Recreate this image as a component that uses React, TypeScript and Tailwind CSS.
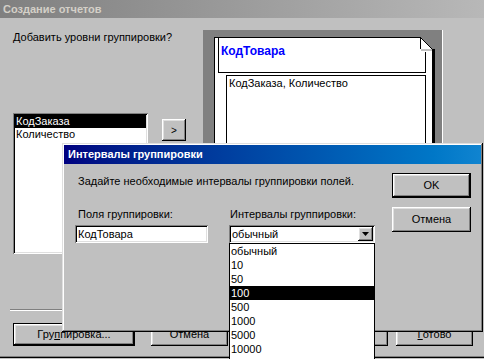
import React from 'react';

const raised = 'shadow-[inset_-1px_-1px_0_#000,inset_1px_1px_0_#fff,inset_-2px_-2px_0_#808080,inset_2px_2px_0_#dfdfdf]';
const sunken = 'shadow-[inset_1px_1px_0_#808080,inset_-1px_-1px_0_#fff,inset_2px_2px_0_#000,inset_-2px_-2px_0_#dfdfdf]';

type BtnProps = { className?: string; def?: boolean; children?: React.ReactNode };

// win9x push button; default one gets an extra black frame
const Btn: React.FC<BtnProps> = ({ className = '', def, children }) =>
  def ? (
    <div className={`border border-black ${className}`}>
      <div className={`w-full h-full flex items-center justify-center ${raised}`}>{children}</div>
    </div>
  ) : (
    <div className={`flex items-center justify-center ${raised} ${className}`}>{children}</div>
  );

const intervals = ['обычный', '10', '50', '100', '500', '1000', '5000', '10000'];

export default function App() {
  return (
    <div className="relative w-[484px] h-[359px] overflow-hidden bg-[#c0c0c0] text-black text-[11px] leading-[13px] font-['Liberation_Sans',Arial,sans-serif]">
      {/* outer wizard window */}
      <div className="h-[18px] flex items-center pl-[3px] bg-linear-to-r from-[#808080] to-[#b8b8b8] text-[#d4d0c8] font-bold">
        Создание отчетов
      </div>

      <div className="flex pl-[13px] pt-[12px] h-[282px]">
        <div className="w-[135px] flex flex-col">
          <div className="pt-[1px] whitespace-nowrap">Добавить уровни группировки?</div>
          <div className={`mt-[69px] h-[141px] bg-white p-[2px] ${sunken}`}>
            <div className="h-[13px] pl-[1px] bg-black text-white">КодЗаказа</div>
            <div className="h-[13px] pl-[1px]">Количество</div>
          </div>
        </div>

        <Btn className="ml-[14px] mt-[89px] w-[24px] h-[22px] text-[10px]">&gt;</Btn>

        <div className="ml-[17px] w-[240px] h-[270px] bg-[#808080] border-r border-b border-white">
          <div className="relative ml-[11px] mt-[7px] flex">
            <div className="w-[218px] h-[250px] bg-white border-l border-t border-black">
              <div className="ml-[3px] -mt-px w-[208px] h-[36px] border border-black pl-[2px] pt-[6px] text-[12px] leading-[14px] font-bold text-[#0000ff]">
                КодТовара
              </div>
              <div className="ml-[11px] mt-[2px] w-[200px] h-[180px] border border-black pl-[2px] pt-[1px]">
                КодЗаказа, Количество
              </div>
            </div>
            <div className="w-[3px] h-[238px] mt-[12px] bg-black" />
            <svg className="absolute left-[206px] top-0" width="15" height="15" viewBox="0 0 15 15">
              <rect x="0" y="0" width="15" height="15" fill="#808080" />
              <polygon points="0,0 12,12 12,15 0,15" fill="#fff" />
              <rect x="0" y="0" width="1" height="12" fill="#000" />
              <path d="M0.5 0.5 L12.5 12.5" stroke="#000" strokeWidth="1" />
              <rect x="1" y="12" width="11" height="2" fill="#c0c0c0" />
              <rect x="12" y="12" width="3" height="3" fill="#000" />
            </svg>
          </div>
        </div>
      </div>

      <div className="ml-[10px] mr-[10px] mt-[9px] border-t border-t-[#808080] border-b border-b-white" />

      <div className="flex pl-[13px] mt-[12px]">
        <Btn def className="w-[122px] h-[23px]">
          <span>Гру<u>п</u>пировка...</span>
        </Btn>
        <Btn className="ml-[16px] w-[77px] h-[23px]">Отмена</Btn>
        {/* back / next: covered by the drop-down list */}
        <Btn className="ml-[8px] w-[76px] h-[23px]" />
        <Btn className="w-[76px] h-[23px]" />
        <Btn className="ml-[8px] w-[77px] h-[23px]">
          <span><u>Г</u>отово</span>
        </Btn>
      </div>

      <div className="mt-[10px] border-t border-t-[#808080] border-b border-b-black" />

      {/* modal: grouping intervals */}
      <div className="absolute left-[62px] top-[143px] w-[421px] h-[189px] p-[2px] bg-[#c0c0c0] shadow-[inset_-1px_-1px_0_#000,inset_1px_1px_0_#dfdfdf,inset_-2px_-2px_0_#808080,inset_2px_2px_0_#fff]">
        <div className="h-[19px] flex items-center pl-[4px] bg-linear-to-r from-[#000080] to-[#1084d0] text-white font-bold">
          Интервалы группировки
        </div>
        <div className="flex">
          <div className="w-[326px] flex flex-col pl-[14px]">
            <div className="mt-[11px] whitespace-nowrap">Задайте необходимые интервалы группировки полей.</div>
            <div className="flex mt-[20px]">
              <div className="w-[152px] flex flex-col">
                <div>Поля группировки:</div>
                <div className={`mt-[4px] -ml-[3px] w-[133px] h-[18px] bg-white pl-[3px] pt-[3px] ${sunken}`}>КодТовара</div>
              </div>
              <div className="flex flex-col">
                <div>Интервалы группировки:</div>
                <div className={`relative mt-[4px] -ml-[1px] w-[146px] h-[18px] bg-white p-[2px] flex ${sunken}`}>
                  <div className="flex-1 pl-[1px] pt-[1px]">обычный</div>
                  <div className={`w-[15px] h-[14px] bg-[#c0c0c0] flex items-center justify-center ${raised}`}>
                    <svg width="7" height="4" viewBox="0 0 7 4">
                      <polygon points="0,0 7,0 3.5,4" fill="#000" />
                    </svg>
                  </div>
                  <div className="absolute left-0 top-[18px] w-[146px] h-[120px] bg-white border border-black">
                    {intervals.map((v) => (
                      <div key={v} className={`h-[14px] leading-[14px] pl-[1px] ${v === '100' ? 'bg-black text-white' : ''}`}>
                        {v}
                      </div>
                    ))}
                  </div>
                </div>
              </div>
            </div>
          </div>
          <div className="ml-[2px] flex flex-col">
            <Btn def className="mt-[9px] w-[79px] h-[25px]">OK</Btn>
            <Btn className="mt-[9px] w-[79px] h-[25px]">Отмена</Btn>
          </div>
        </div>
      </div>
    </div>
  );
}
